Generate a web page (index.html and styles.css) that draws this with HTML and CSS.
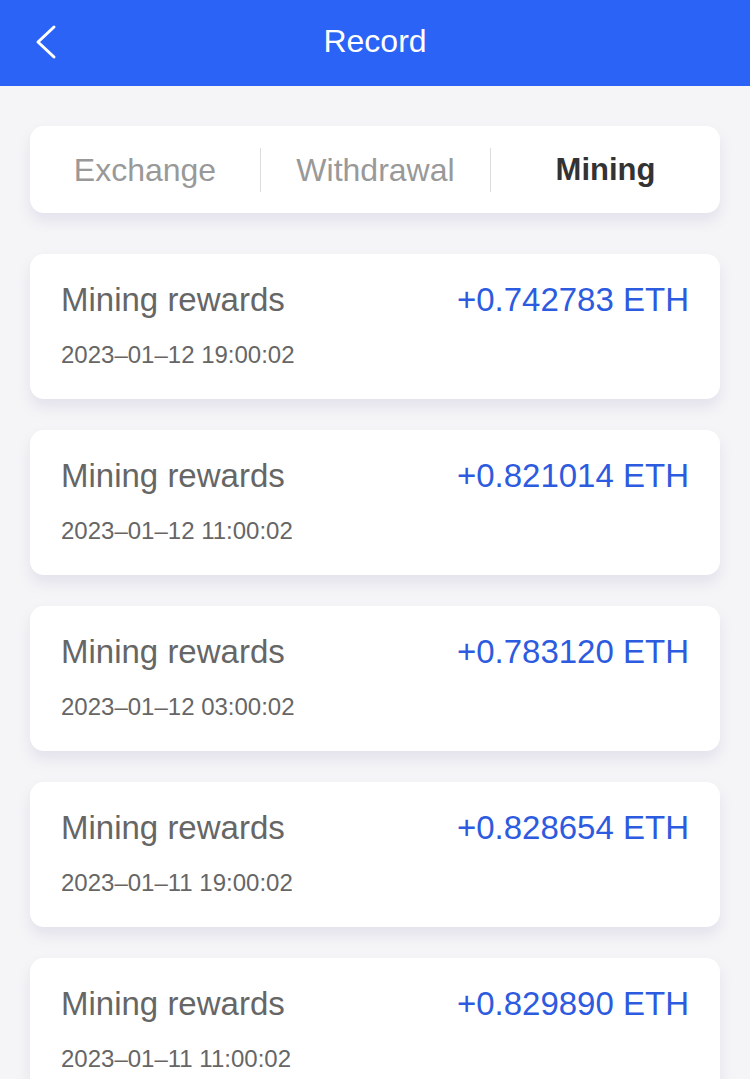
FILE: index.html
```html
<!DOCTYPE html>
<html lang="en">
<head>
    <meta charset="UTF-8">
    <meta name="viewport" content="width=device-width, initial-scale=1.0">
    <title>Record</title>
    <link rel="stylesheet" href="styles.css">
</head>
<body>
    <!-- Top bar -->
    <header class="top-bar">
        <a href="javascript:void(0)" class="back">
            <svg width="24" height="36" viewBox="0 0 24 36">
                <polyline points="19,3 3,18 19,33" fill="none" stroke="#fff" stroke-width="3" stroke-linecap="round" stroke-linejoin="round"/>
            </svg>
        </a>
        <h1>Record</h1>
    </header>

    <main class="content">
        <div class="tabs">
            <div class="tab">Exchange</div>
            <div class="tab">Withdrawal</div>
            <div class="tab active">Mining</div>
        </div>

        <div class="record">
            <div class="record-row">
                <span class="record-title">Mining rewards</span>
                <span class="record-amount">+0.742783 ETH</span>
            </div>
            <div class="record-date">2023–01–12 19:00:02</div>
        </div>

        <div class="record">
            <div class="record-row">
                <span class="record-title">Mining rewards</span>
                <span class="record-amount">+0.821014 ETH</span>
            </div>
            <div class="record-date">2023–01–12 11:00:02</div>
        </div>

        <div class="record">
            <div class="record-row">
                <span class="record-title">Mining rewards</span>
                <span class="record-amount">+0.783120 ETH</span>
            </div>
            <div class="record-date">2023–01–12 03:00:02</div>
        </div>

        <div class="record">
            <div class="record-row">
                <span class="record-title">Mining rewards</span>
                <span class="record-amount">+0.828654 ETH</span>
            </div>
            <div class="record-date">2023–01–11 19:00:02</div>
        </div>

        <div class="record">
            <div class="record-row">
                <span class="record-title">Mining rewards</span>
                <span class="record-amount">+0.829890 ETH</span>
            </div>
            <div class="record-date">2023–01–11 11:00:02</div>
        </div>
    </main>
</body>
</html>
```

FILE: styles.css
```css
* {
    margin: 0;
    padding: 0;
    box-sizing: border-box;
    font-family: 'Liberation Sans', Arial, sans-serif;
}

:root {
    --primary-color: #2a63f6;
    --amount-color: #2d5be0;
}

body {
    background-color: #f5f5f7;
    width: 750px;
}

.top-bar {
    background-color: var(--primary-color);
    height: 86px;
    display: flex;
    align-items: center;
    justify-content: center;
    position: relative;
}

.top-bar h1 {
    color: white;
    font-size: 32px;
    font-weight: normal;
    margin-top: -4px;
}

.back {
    position: absolute;
    left: 35px;
    top: 24px;
    display: block;
    height: 36px;
}

.content {
    padding: 40px 30px;
    display: flex;
    flex-direction: column;
    gap: 31px;
}

.tabs {
    background: white;
    border-radius: 14px;
    height: 87px;
    display: grid;
    grid-template-columns: 1fr 1fr 1fr;
    align-items: center;
    box-shadow: 0 8px 14px rgba(110, 100, 170, 0.13);
    margin-bottom: 10px;
}

.tab {
    text-align: center;
    font-size: 32px;
    color: #999;
    line-height: 44px;
}

.tab + .tab {
    border-left: 1px solid #ddd;
}

.tab.active {
    color: #333;
    font-weight: bold;
    font-size: 31px;
}

.record {
    background: white;
    border-radius: 14px;
    height: 145px;
    padding: 26px 31px 0 31px;
    box-shadow: 0 8px 14px rgba(110, 100, 170, 0.13);
}

.record-row {
    display: flex;
    justify-content: space-between;
    align-items: center;
    line-height: 40px;
}

.record-title {
    font-size: 33px;
    color: #666;
}

.record-amount {
    font-size: 33px;
    color: var(--amount-color);
}

.record-date {
    font-size: 24px;
    color: #666;
    margin-top: 21px;
}
```
